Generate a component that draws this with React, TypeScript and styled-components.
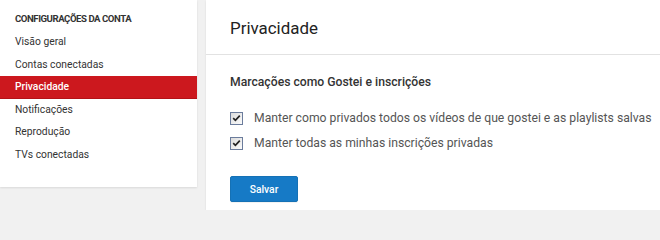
import React, { useState } from 'react';
import styled, { createGlobalStyle } from 'styled-components';

const GlobalStyle = createGlobalStyle`
  html, body {
    margin: 0;
    padding: 0;
    height: 210px;
    overflow: hidden;
    background: #f1f1f1;
    font-family: Roboto, "Liberation Sans", Arial, sans-serif;
  }
`;

const menuItems = [
  'Visão geral',
  'Contas conectadas',
  'Privacidade',
  'Notificações',
  'Reprodução',
  'TVs conectadas',
];

const options = [
  'Manter como privados todos os vídeos de que gostei e as playlists salvas',
  'Manter todas as minhas inscrições privadas',
];

export default function App() {
  const [active, setActive] = useState('Privacidade');
  const [checked, setChecked] = useState([true, true]);

  const toggle = (index: number) => {
    setChecked(prev => prev.map((value, i) => (i === index ? !value : value)));
  };

  return (
    <>
      <GlobalStyle />
      <Page>
        <Sidebar>
          <SidebarTitle>CONFIGURAÇÕES DA CONTA</SidebarTitle>
          <Menu>
            {menuItems.map(item => (
              <MenuItem key={item} active={active === item} onClick={() => setActive(item)}>
                {item}
              </MenuItem>
            ))}
          </Menu>
        </Sidebar>
        <Main>
          <MainHeader>
            <Title>Privacidade</Title>
          </MainHeader>
          <Section>
            <SectionTitle>Marcações como Gostei e inscrições</SectionTitle>
            <OptionList>
              {options.map((label, index) => (
                <Option key={label} onClick={() => toggle(index)}>
                  <CheckBox>
                    {checked[index] && (
                      <svg width="9" height="8" viewBox="0 0 9 8">
                        <path d="M1.2 4.2 L3.4 6.3 L7.8 1.6" fill="none" stroke="#222" strokeWidth="1.7" />
                      </svg>
                    )}
                  </CheckBox>
                  <OptionLabel>{label}</OptionLabel>
                </Option>
              ))}
            </OptionList>
            <SaveButton>Salvar</SaveButton>
          </Section>
        </Main>
      </Page>
    </>
  );
}

const Page = styled.div`
  display: flex;
  align-items: flex-start;
  gap: 9px;
  width: 660px;
  height: 210px;
  overflow: hidden;
`;

const Sidebar = styled.div`
  width: 197px;
  height: 187px;
  flex-shrink: 0;
  background: #fff;
  box-shadow: 0 1px 2px rgba(0, 0, 0, 0.1);
  padding-top: 11px;
  box-sizing: border-box;
`;

const SidebarTitle = styled.div`
  padding-left: 15px;
  font-size: 9.6px;
  font-weight: 700;
  letter-spacing: -0.45px;
  color: #333;
  line-height: 16px;
  margin-bottom: 4px;
`;

const Menu = styled.div`
  display: flex;
  flex-direction: column;
`;

const MenuItem = styled.div<{ active: boolean }>`
  height: 22.5px;
  line-height: 22px;
  padding-left: 15px;
  font-size: 10.3px;
  font-weight: ${({ active }) => (active ? 500 : 400)};
  color: ${({ active }) => (active ? '#fff' : '#333')};
  background: ${({ active }) => (active ? '#cc181e' : 'transparent')};
  border-bottom: 1px solid ${({ active }) => (active ? '#b31217' : 'transparent')};
  box-sizing: border-box;
  cursor: pointer;
`;

const Main = styled.div`
  flex: 1;
  height: 210px;
  background: #fff;
  box-shadow: 0 1px 2px rgba(0, 0, 0, 0.1);
`;

const MainHeader = styled.div`
  height: 55px;
  padding-left: 24px;
  display: flex;
  align-items: center;
  border-bottom: 1px solid #e2e2e2;
  box-sizing: border-box;
`;

const Title = styled.h1`
  margin: 0;
  font-size: 16.9px;
  font-weight: 400;
  color: #222;
  padding-top: 2px;
`;

const Section = styled.div`
  padding: 18px 24px 0;
`;

const SectionTitle = styled.h2`
  margin: 0;
  font-size: 12.2px;
  font-weight: 500;
  color: #333;
  line-height: 18px;
`;

const OptionList = styled.div`
  display: flex;
  flex-direction: column;
  gap: 7px;
  margin-top: 18px;
`;

const Option = styled.label`
  display: flex;
  align-items: center;
  gap: 11px;
  cursor: pointer;
  height: 18px;
`;

const CheckBox = styled.span`
  width: 13px;
  height: 13px;
  flex-shrink: 0;
  border: 1px solid #6b7c9c;
  background: linear-gradient(135deg, #dcdcdc, #fbfbfb);
  box-sizing: border-box;
  display: flex;
  align-items: center;
  justify-content: center;
`;

const OptionLabel = styled.span`
  font-size: 12.2px;
  color: #555;
  white-space: nowrap;
`;

const SaveButton = styled.button`
  margin-top: 24px;
  width: 68px;
  height: 26px;
  background: #167ac6;
  border: 1px solid #1571b5;
  border-radius: 2px;
  color: #fff;
  font-family: Roboto, "Liberation Sans", Arial, sans-serif;
  font-size: 10.3px;
  font-weight: 500;
  cursor: pointer;
  box-shadow: 0 1px 0 rgba(0, 0, 0, 0.05);
`;
